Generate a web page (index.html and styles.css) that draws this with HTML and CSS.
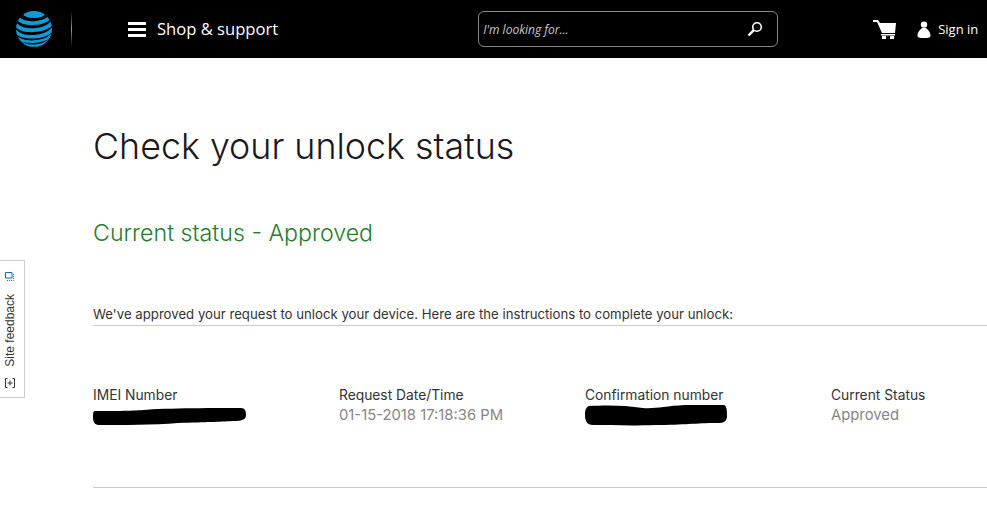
FILE: index.html
```html
<!DOCTYPE html>
<html lang="en">
<head>
    <meta charset="UTF-8">
    <meta name="viewport" content="width=device-width, initial-scale=1.0">
    <title>Check your unlock status</title>
    <link rel="stylesheet" href="styles.css">
</head>
<body>
    <div class="navbar">
        <a class="logo" href="#">
            <svg width="38" height="38" viewBox="0 0 38 38">
                <defs>
                    <clipPath id="globe"><circle cx="19" cy="19" r="18"/></clipPath>
                </defs>
                <g clip-path="url(#globe)" fill="none" stroke="#0e9bd8">
                    <ellipse cx="19" cy="4" rx="11" ry="4" fill="#0e9bd8" stroke="none"/>
                    <path d="M3 8 C9 16 29 14 35 7" stroke-width="4"/>
                    <path d="M0 14 C8 23 30 22 38 12" stroke-width="4"/>
                    <path d="M0 21 C8 30 30 28 38 19" stroke-width="3.5"/>
                    <path d="M1 27 C9 34 29 33 37 25" stroke-width="2.6"/>
                    <path d="M4 31 C11 37 27 37 34 30" stroke-width="2"/>
                    <path d="M9 35 C14 38 24 38 29 35" stroke-width="1.6"/>
                </g>
            </svg>
        </a>
        <span class="divider"></span>
        <a class="shop" href="#">
            <span class="burger"><i></i><i></i><i></i></span>
            <span class="shop-text">Shop &amp; support</span>
        </a>
        <div class="search">
            <span>I'm looking for...</span>
            <svg width="16" height="16" viewBox="0 0 16 16" fill="none" stroke="#fff">
                <circle cx="10" cy="6" r="4.3" stroke-width="1.6"/>
                <path d="M6.800 9.200 L1.500 14.500" stroke-width="2.400"/>
            </svg>
        </div>
        <svg class="cart" width="24" height="19" viewBox="0 0 24 19" fill="#fff">
            <path d="M0 0 H5 L7 3 H23 L22 13 H9 L4 2 H0 Z"/>
            <rect x="8" y="14" width="14" height="1.500"/>
            <rect x="9" y="16" width="4" height="3"/>
            <rect x="17" y="16" width="4" height="3"/>
        </svg>
        <svg class="person" width="14" height="17" viewBox="0 0 14 17" fill="#fff">
            <circle cx="7" cy="3.600" r="3.200"/>
            <path d="M5 7 H9 C11 9 13.500 11 13.500 14.500 C13.500 16.500 12 17 7 17 C2 17 .5 16.500 .5 14.500 C.5 11 3 9 5 7 Z"/>
        </svg>
        <a class="signin" href="#">Sign in</a>
    </div>

    <div class="feedback">
        <svg width="10" height="10" viewBox="0 0 10 10" fill="none">
            <path d="M.5 .5 H7 V6 H.5 Z" stroke="#0a6fb5"/>
            <path d="M8.500 2 V8.500 H2" stroke="#0a6fb5" stroke-dasharray="1 1"/>
        </svg>
        <span>Site feedback</span>
        <svg width="10" height="10" viewBox="0 0 10 10" fill="none" stroke="#333">
            <path d="M2.500 .5 H.5 V9.500 H2.500 M7.500 .5 H9.500 V9.500 H7.500 M5 2.500 V7.500 M2.500 5 H7.500"/>
        </svg>
    </div>

    <div class="content">
        <h1>Check your unlock status</h1>
        <h2>Current status - Approved</h2>
        <p class="intro">We've approved your request to unlock your device. Here are the instructions to complete your unlock:</p>
        <div class="details">
            <div class="item">
                <div class="label">IMEI Number</div>
                <svg class="blackout imei" width="153" height="17" viewBox="0 0 153 17">
                    <path d="M2 3 C15 3 40 3 50 2 C70 0 130 0 148 0 C152 0 153 3 153 7 C153 11 150 13 140 13 C125 14 115 14 85 15 C60 17 30 17 6 17 C1 17 0 13 0 9 C0 6 0 3 2 3 Z" fill="#000"/>
                </svg>
            </div>
            <div class="item">
                <div class="label">Request Date/Time</div>
                <div class="value">01-15-2018 17:18:36 PM</div>
            </div>
            <div class="item">
                <div class="label">Confirmation number</div>
                <svg class="blackout" width="142" height="21" viewBox="0 0 142 21">
                    <path d="M4 1 C20 0 40 0 58 3 C70 4 80 1 100 0 C120 0 130 0 139 0 C142 1 142 6 142 12 C141 16 140 18 132 18 C110 18 100 20 70 20 C45 21 25 20 8 20 C2 20 0 16 0 10 C0 5 1 2 4 1 Z" fill="#000"/>
                </svg>
            </div>
            <div class="item">
                <div class="label">Current Status</div>
                <div class="value">Approved</div>
            </div>
        </div>
    </div>
</body>
</html>
```

FILE: styles.css
```css
body {
    font-family: "Open Sans", sans-serif;
    margin: 0;
    background: #fff;
    color: #222;
    overflow: hidden;
}

a {
    color: #fff;
    text-decoration: none;
}

.navbar {
    height: 58px;
    background: #000;
    display: flex;
    align-items: center;
    color: #fff;
}

.logo {
    display: flex;
    margin-left: 15px;
}

.divider {
    width: 1px;
    height: 36px;
    margin-left: 18px;
    background: linear-gradient(#000, #999 50%, #000);
}

.shop {
    display: flex;
    align-items: center;
    margin-left: 56px;
    font-size: 16.6px;
}

.shop-text {
    margin-bottom: 2px;
}

.burger {
    width: 18px;
    margin-right: 11px;
}

.burger i {
    display: block;
    height: 3px;
    margin: 3px 0;
    background: #fff;
}

.search {
    width: 300px;
    height: 36px;
    margin-left: 200px;
    padding: 0 14px 0 4px;
    box-sizing: border-box;
    border: 1px solid #888;
    border-radius: 6px;
    display: flex;
    align-items: center;
    justify-content: space-between;
    font-size: 12px;
    font-style: italic;
    color: #ccc;
}

.cart {
    margin-left: 95px;
}

.person {
    margin-left: 20px;
}

.signin {
    margin-left: 7px;
    font-size: 13px;
}

.feedback {
    position: absolute;
    left: 0;
    top: 260px;
    width: 25px;
    height: 138px;
    box-sizing: border-box;
    border: 1px solid #ccc;
    border-left: none;
    padding: 11px 7px 9px 2px;
    display: flex;
    flex-direction: column;
    align-items: center;
    justify-content: space-between;
    background: #fff;
}

.feedback span {
    writing-mode: vertical-rl;
    transform: rotate(180deg);
    font-family: "Liberation Sans", sans-serif;
    font-size: 12px;
    color: #333;
}

.content {
    padding-left: 93px;
    font-family: Inter, sans-serif;
}

h1 {
    margin: 66px 0 0;
    font-size: 35.8px;
    line-height: 44px;
    font-weight: 300;
    color: #1a1a1a;
}

h2 {
    margin: 50px 0 0;
    font-size: 23.2px;
    line-height: 30px;
    font-weight: 300;
    color: #267d30;
}

.intro {
    margin: 57px 0 0;
    padding-bottom: 2px;
    font-size: 13.2px;
    line-height: 18px;
    color: #333;
    border-bottom: 1px solid #ccc;
}

.details {
    margin-top: 60px;
    height: 101px;
    display: flex;
    border-bottom: 1px solid #ccc;
}

.item {
    flex: none;
    width: 246px;
}

.item:last-child {
    width: auto;
}

.label {
    font-size: 13.8px;
    line-height: 18px;
    color: #333;
}

.value {
    font-size: 14.8px;
    line-height: 22px;
    color: #868686;
}

.blackout {
    display: block;
    margin-top: 1px;
}

.imei {
    margin-top: 4px;
}
```
